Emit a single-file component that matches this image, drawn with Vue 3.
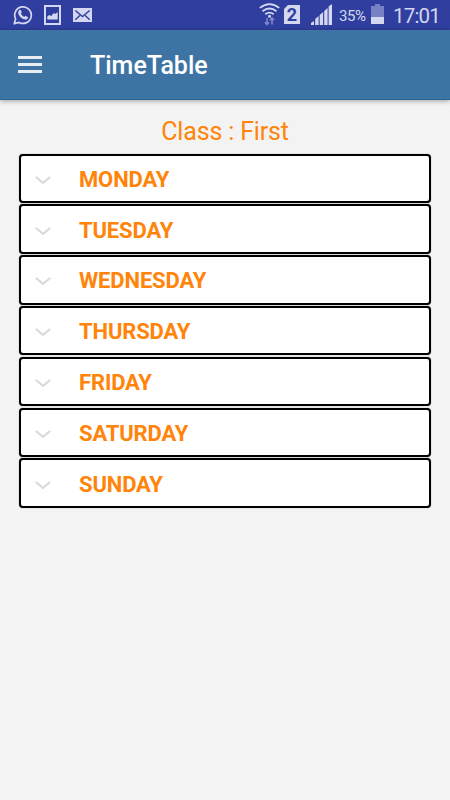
<script setup>
const days = ['MONDAY', 'TUESDAY', 'WEDNESDAY', 'THURSDAY', 'FRIDAY', 'SATURDAY', 'SUNDAY']
</script>

<template>
  <div class="screen">
    <div class="status">
      <svg class="whatsapp" width="20" height="20" viewBox="0 0 20 20">
        <path d="M1.2 18.8l1.4-4.9A8.3 8.3 0 1 1 6 17.4z" fill="none" stroke="#d3d7f0" stroke-width="1.7" stroke-linejoin="round" />
        <path d="M6.2 5.2c.6-.6 1.4-.5 1.7.1l.8 1.9c.1.4-.6 1-.8 1.4.6 1.5 1.9 2.7 3.4 3.3.5-.3 1-1.2 1.4-1l2 1c.6.3.2 1.5-.4 2-1.3 1-3.2.6-5.1-.5C7 12.1 5.5 9.8 5.2 8c-.1-1.200.3-2.200 1-2.800z" fill="#d3d7f0" />
      </svg>
      <svg class="picture" width="17" height="20" viewBox="0 0 17 20">
        <path d="M0 0h17v20H0zM2 2v16h13V2z" fill="#d3d7f0" fill-rule="evenodd" />
        <path d="M3.300 14.500v-3l2-1.500 2 1 2.500-3 1.500 1 2.400-2v7.500z" fill="#d3d7f0" />
      </svg>
      <svg class="mail" width="19" height="14" viewBox="0 0 19 14">
        <path d="M0 0h19v14H0z" fill="#d3d7f0" />
        <path d="M2.300 2.500l7.200 6 7.200-6M2.300 11.800l4.500-4.300M16.700 11.800l-4.500-4.300" fill="none" stroke="#303f9f" stroke-width="1.400" />
      </svg>
      <svg class="wifi" width="21" height="23" viewBox="0 0 21 23">
        <g fill="none" stroke="#d3d7f0" stroke-width="1.800">
          <path d="M.8 4.900Q10.500-2.600 20.200 4.900" />
          <path d="M3.500 8.200q7-5.400 14 0" />
          <path d="M6.300 11.300q4.200-3.300 8.400 0" />
        </g>
        <circle cx="10.500" cy="13.300" r="1.500" fill="#d3d7f0" />
        <path d="M8 15v6.500M6 19.200l2 2.300 2-2.300M13 21.500V15M11 17.300l2-2.300 2 2.300" fill="none" stroke="#8089c9" stroke-width="1.500" />
      </svg>
      <span class="sim">2</span>
      <svg class="signal" width="21" height="21" viewBox="0 0 21 21">
        <path d="M0 21v-2l3-2v4zM4.200 21v-6l3.400-3v9zM8.700 21V11l3.400-3v13zM13.200 21V7l3.400-3v17zM17.600 21V2.500L21 0v21z" fill="#d3d7f0" />
      </svg>
      <span class="percent">35%</span>
      <svg class="battery" width="13" height="20" viewBox="0 0 13 20">
        <path d="M4 0h5v2h4v18H0V2h4z" fill="#7881c4" />
        <path d="M0 13h13v7H0z" fill="#d3d7f0" />
      </svg>
      <span class="clock">17:01</span>
    </div>
    <header class="bar">
      <div class="menu"><i></i><i></i><i></i></div>
      <h1>TimeTable</h1>
    </header>
    <main>
      <h2>Class : First</h2>
      <ul>
        <li v-for="day in days" :key="day">
          <div class="box">
            <svg class="chevron" width="16" height="9" viewBox="0 0 16 9">
              <path d="M1.500 1.500L8 6.900l6.500-5.400" fill="none" stroke="#dadada" stroke-width="2.200" stroke-linecap="round" stroke-linejoin="round" />
            </svg>
            <span>{{ day }}</span>
          </div>
        </li>
      </ul>
    </main>
  </div>
</template>

<style>
body { background: #f3f3f3; }
</style>

<style scoped>
.screen {
  width: 450px;
  height: 800px;
  overflow: hidden;
  background: #f3f3f3;
  font-family: Roboto, sans-serif;
}
.status {
  display: flex;
  align-items: flex-start;
  box-sizing: border-box;
  height: 30px;
  padding-left: 13px;
  background: #303f9f;
  color: #d3d7f0;
}
.status > * { flex: none; }
.whatsapp { margin-top: 5px; }
.picture { margin: 5px 0 0 11px; }
.mail { margin: 8px 0 0 12px; }
.wifi { margin: 3px 0 0 167px; }
.sim {
  width: 16px;
  height: 19px;
  margin: 5px 0 0 4px;
  background: #d3d7f0;
  clip-path: polygon(4px 0, 100% 0, 100% 100%, 0 100%, 0 4px);
  color: #303f9f;
  font-size: 18px;
  font-weight: 700;
  line-height: 20px;
  text-align: center;
}
.signal { margin: 4px 0 0 11px; }
.percent {
  width: 28px;
  margin: 6px 0 0 7px;
  font-size: 15px;
  line-height: 20px;
  letter-spacing: -0.400px;
}
.battery { margin: 4px 0 0 4px; }
.clock {
  margin: 3px 0 0 9px;
  font-size: 20.500px;
  line-height: 26px;
  letter-spacing: -0.800px;
}
.bar {
  display: flex;
  align-items: center;
  box-sizing: border-box;
  height: 70px;
  padding-left: 18px;
  border-bottom: 1px solid #25679a;
  background: #3e74a4;
  box-shadow: 0 1px 5px rgba(0, 0, 0, 0.35);
}
.menu {
  display: flex;
  flex-direction: column;
  gap: 4px;
  width: 24px;
}
.menu i {
  height: 3px;
  background: #e6edf3;
}
h1 {
  margin: 3px 0 0 48px;
  color: #fff;
  font-size: 25px;
  font-weight: 500;
  line-height: 30px;
}
main { padding: 16px 19px 0; }
h2 {
  margin: 0;
  color: #ff8409;
  font-size: 25px;
  font-weight: 400;
  line-height: 31px;
  letter-spacing: -0.150px;
  text-align: center;
}
ul {
  margin: 6.500px 0 0;
  padding: 0;
  list-style: none;
}
li {
  height: 50.830px;
}
.box {
  display: flex;
  align-items: center;
  box-sizing: border-box;
  height: 49.500px;
  padding-left: 14px;
  border: 2px solid #000;
  border-radius: 4px;
  background: #fff;
  box-shadow: 0 0 1px rgba(0, 0, 0, 0.55);
}
.box span {
  margin: 3px 0 0 28px;
  color: #ff8409;
  font-size: 22px;
  font-weight: 700;
  line-height: 26px;
  letter-spacing: -0.140px;
}
.chevron { margin-top: 4px; }
</style>
